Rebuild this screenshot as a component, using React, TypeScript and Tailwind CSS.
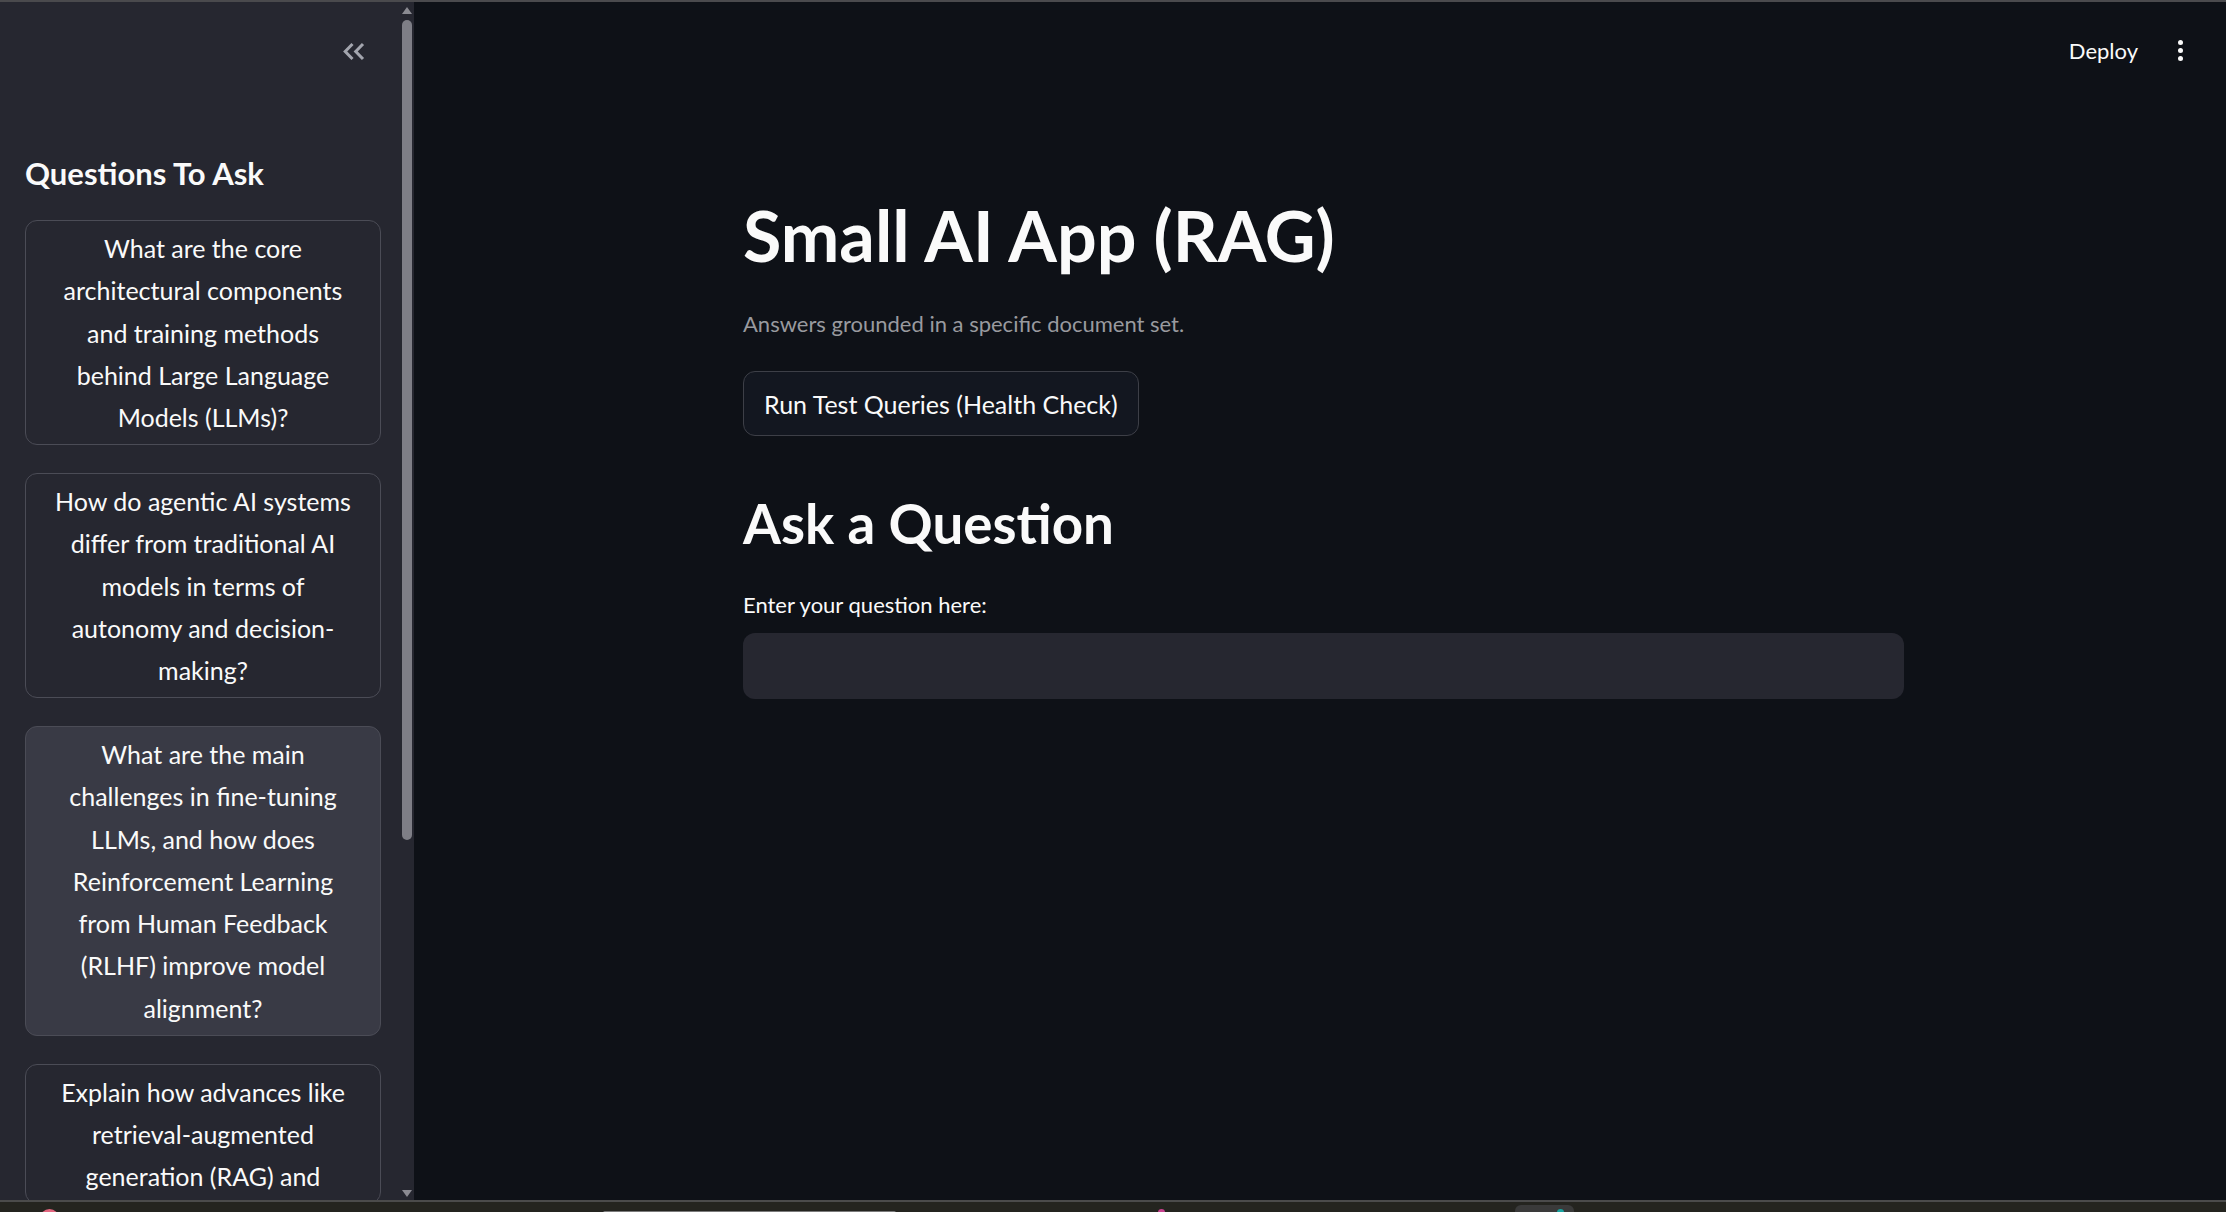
import React from "react";

const questions: { lines: string[]; active?: boolean }[] = [
  {
    lines: [
      "What are the core",
      "architectural components",
      "and training methods",
      "behind Large Language",
      "Models (LLMs)?",
    ],
  },
  {
    lines: [
      "How do agentic AI systems",
      "differ from traditional AI",
      "models in terms of",
      "autonomy and decision-",
      "making?",
    ],
  },
  {
    lines: [
      "What are the main",
      "challenges in fine-tuning",
      "LLMs, and how does",
      "Reinforcement Learning",
      "from Human Feedback",
      "(RLHF) improve model",
      "alignment?",
    ],
    active: true,
  },
  {
    lines: ["Explain how advances like", "retrieval-augmented", "generation (RAG) and"],
  },
];

function DoubleChevron() {
  return (
    <svg width="24" height="19" viewBox="0 0 24 19" fill="none">
      <polyline points="10.5,2 3.2,9.5 10.5,17" stroke="#a3a5ae" strokeWidth="3" />
      <polyline points="21,2 13.7,9.5 21,17" stroke="#a3a5ae" strokeWidth="3" />
    </svg>
  );
}

export default function App() {
  return (
    <div className="w-[2226px] h-[1212px] flex flex-col overflow-hidden bg-[#0e1117] text-[#fafafa] font-['Lato','Noto_Sans',sans-serif]">
      <div className="h-[2px] shrink-0 bg-[#4a4a4d]" />
      <div className="flex flex-1 min-h-0">
        {/* Sidebar */}
        <aside className="w-[414px] shrink-0 bg-[#262730] flex overflow-hidden">
          <div className="w-[400px] flex flex-col pl-[25px] pr-[19px]">
            <div className="flex justify-end pr-[15px] pt-[40px]">
              <DoubleChevron />
            </div>
            <h2 className="mt-[93.5px] text-[31px] leading-[37px] font-bold">Questions To Ask</h2>
            <div className="mt-[28.5px] flex flex-col gap-[27.5px]">
              {questions.map((q, i) => (
                <div
                  key={i}
                  className={
                    "w-[356px] shrink-0 rounded-[12px] border border-[#4b4c56] py-[6px] text-center text-[25px] leading-[42.3px] " +
                    (q.active ? "bg-[#393a45]" : "bg-[#262730]")
                  }
                >
                  {q.lines.map((l, j) => (
                    <div key={j}>{l}</div>
                  ))}
                </div>
              ))}
            </div>
          </div>
          <div className="w-[14px] pl-[2px] flex flex-col">
            <svg className="mt-[5px]" width="10" height="7" viewBox="0 0 10 7">
              <polygon points="5,0 10,7 0,7" fill="#8b8b92" />
            </svg>
            <div className="mt-[6px] h-[820px] w-[10px] rounded-full bg-[#7e7e86]" />
            <svg className="mt-[350px]" width="10" height="7" viewBox="0 0 10 7">
              <polygon points="0,0 10,0 5,7" fill="#8b8b92" />
            </svg>
          </div>
        </aside>

        {/* Main */}
        <main className="flex-1 flex flex-col">
          <div className="flex justify-end items-center pr-[43px] pt-[35.5px] gap-[40px]">
            <span className="text-[22px] leading-[26px]">Deploy</span>
            <div className="flex flex-col gap-[3px]">
              <div className="w-[5px] h-[5px] rounded-full bg-[#fafafa]" />
              <div className="w-[5px] h-[5px] rounded-full bg-[#fafafa]" />
              <div className="w-[5px] h-[5px] rounded-full bg-[#fafafa]" />
            </div>
          </div>
          <div className="ml-[329px] w-[1161px] flex flex-col items-start">
            <h1 className="mt-[129.5px] text-[70px] leading-[84px] font-bold">Small AI App (RAG)</h1>
            <p className="mt-[33.5px] text-[22px] leading-[26px] text-[#999a9f]">
              Answers grounded in a specific document set.
            </p>
            <button className="mt-[34.5px] h-[65px] px-[20px] rounded-[12px] border border-[#3d3f47] bg-[#131720] text-[25px] leading-[30px] text-[#fafafa]">
              Run Test Queries (Health Check)
            </button>
            <h2 className="mt-[53.5px] text-[54.7px] leading-[66px] font-bold">Ask a Question</h2>
            <label className="mt-[36px] text-[22px] leading-[26px]">Enter your question here:</label>
            <div className="mt-[15.5px] w-full h-[66px] rounded-[12px] bg-[#262730]" />
          </div>
        </main>
      </div>

      {/* Taskbar strip */}
      <div className="h-[12px] shrink-0 border-t-2 border-[#4b4b4b] bg-[#24241f] flex items-start overflow-hidden">
        <div className="ml-[40px] mt-[7px] w-[19px] h-[19px] shrink-0 rounded-full bg-[#e3667f]" />
        <div className="ml-[544px] mt-[9px] w-[293px] h-[4px] shrink-0 rounded-full bg-[#7a7a7a]" />
        <div className="ml-[262px] mt-[7px] w-[7px] h-[7px] shrink-0 rounded-full bg-[#c8418f]" />
        <div className="ml-[350px] mt-[3px] w-[59px] h-[20px] shrink-0 rounded-t-[6px] bg-[#3a3a3a] pl-[42px] pt-[4px]">
          <div className="w-[7px] h-[7px] rounded-full bg-[#19a3a0]" />
        </div>
      </div>
    </div>
  );
}
